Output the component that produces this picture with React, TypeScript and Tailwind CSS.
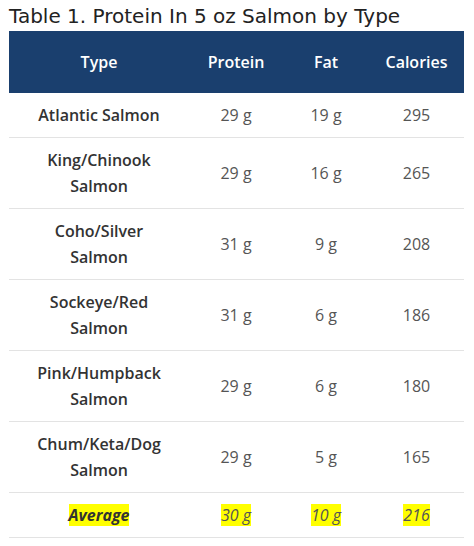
const rows = [
  { type: ['Atlantic Salmon'], protein: '29 g', fat: '19 g', calories: '295' },
  { type: ['King/Chinook', 'Salmon'], protein: '29 g', fat: '16 g', calories: '265' },
  { type: ['Coho/Silver', 'Salmon'], protein: '31 g', fat: '9 g', calories: '208' },
  { type: ['Sockeye/Red', 'Salmon'], protein: '31 g', fat: '6 g', calories: '186' },
  { type: ['Pink/Humpback', 'Salmon'], protein: '29 g', fat: '6 g', calories: '180' },
  { type: ['Chum/Keta/Dog', 'Salmon'], protein: '29 g', fat: '5 g', calories: '165' },
];

function Hl({ children, bold }: { children: React.ReactNode; bold?: boolean }) {
  return (
    <span className={`bg-[#ffff00] italic ${bold ? 'font-bold text-[#333]' : 'text-[#555]'}`}>
      {children}
    </span>
  );
}

export default function App() {
  return (
    <div className="h-[546px] w-[474px] bg-white pl-[9px] pr-[10px] pt-[3px]" style={{ fontFamily: '"Open Sans", sans-serif' }}>
      <h1
        className="text-[20px] leading-[26px] text-[#222]"
        style={{ fontFamily: '"DejaVu Sans", sans-serif' }}
      >
        Table 1. Protein In 5 oz Salmon by Type
      </h1>
      <table className="mt-[2px] w-[455px] table-fixed border-collapse text-center text-[16px] leading-[26px]">
        <colgroup>
          <col className="w-[180px]" />
          <col className="w-[94px]" />
          <col className="w-[86px]" />
          <col className="w-[95px]" />
        </colgroup>
        <thead>
          <tr className="h-[62px] bg-[#1a3f6e] font-semibold text-white">
            <th className="font-semibold">Type</th>
            <th className="font-semibold">Protein</th>
            <th className="font-semibold">Fat</th>
            <th className="font-semibold">Calories</th>
          </tr>
        </thead>
        <tbody className="text-[#555]">
          {rows.map((r) => (
            <tr key={r.type.join(' ')} className="border-b border-[#e3e3e3]">
              <td className="px-2 py-[9px] font-semibold text-[#333]">
                {r.type.map((t) => (
                  <div key={t}>{t}</div>
                ))}
              </td>
              <td>{r.protein}</td>
              <td>{r.fat}</td>
              <td>{r.calories}</td>
            </tr>
          ))}
          <tr className="border-b border-[#e3e3e3]">
            <td className="py-[9px]">
              <Hl bold>Average</Hl>
            </td>
            <td>
              <Hl>30 g</Hl>
            </td>
            <td>
              <Hl>10 g</Hl>
            </td>
            <td>
              <Hl>216</Hl>
            </td>
          </tr>
        </tbody>
      </table>
    </div>
  );
}
